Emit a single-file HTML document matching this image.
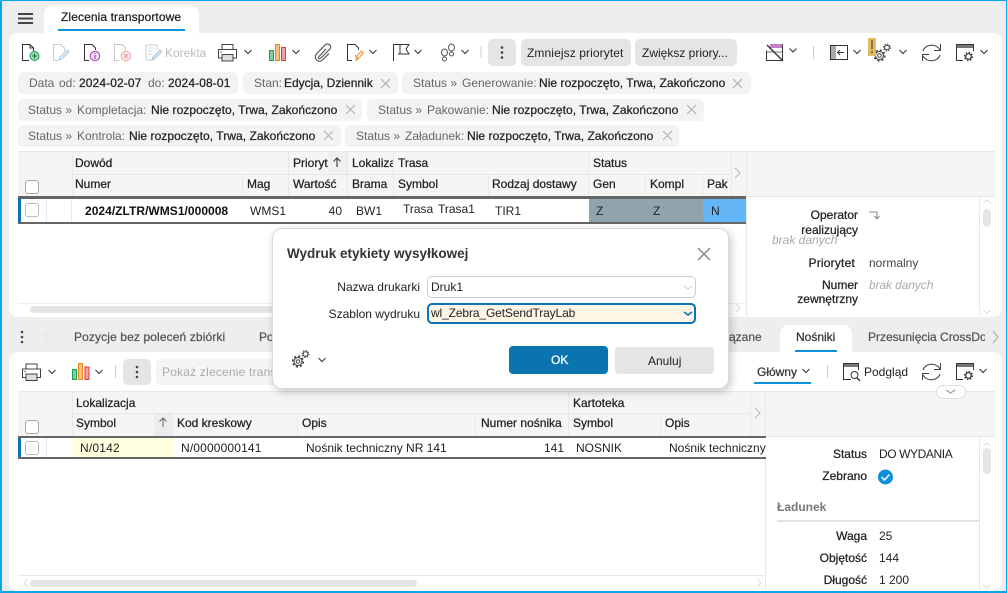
<!DOCTYPE html>
<html lang="pl"><head><meta charset="utf-8"><title>Zlecenia transportowe</title>
<style>
html,body{margin:0;padding:0;background:#eee}
body{width:1007px;height:593px;position:relative;overflow:hidden;font:12px/16px "Liberation Sans",Arial,sans-serif;color:#222}
.a{position:absolute}
.t{position:absolute;white-space:nowrap;height:16px}
.g{color:#666}
.m{-webkit-text-stroke:.25px currentColor}
.r{text-align:right}
.chip{position:absolute;background:#f3f3f3;border-radius:5px;height:22px}
.btn{position:absolute;background:#e5e5e5;border-radius:5px}
.h{background:#f5f5f5;position:absolute}
.v{position:absolute;width:1px;background:#e8e8e8}
.l{position:absolute;height:1px;background:#e8e8e8}
.cb{position:absolute;width:12px;height:12px;border:1px solid #aaa;border-radius:3px;background:#fff}
svg{position:absolute;left:0;top:0}
</style></head><body>
<div class="a" style="left:9px;top:33px;width:993px;height:284px;background:#fff;border-radius:9px"></div>
<div class="a" style="left:44px;top:5px;width:155px;height:30px;background:#fff;border-radius:9px 9px 0 0"></div>
<div class="a" style="left:58px;top:29px;width:127px;height:2px;background:#0a93d6"></div>
<div class="t m" style="left:61px;top:9px;letter-spacing:.1px">Zlecenia transportowe</div>

<div class="btn" style="left:488px;top:39px;width:28px;height:27px"></div>
<div class="btn" style="left:521px;top:39px;width:110px;height:27px"></div>
<div class="btn" style="left:635px;top:39px;width:102px;height:27px"></div>
<div class="t" style="left:527px;top:45px;letter-spacing:.1px">Zmniejsz priorytet</div>
<div class="t" style="left:642px;top:45px">Zwiększ priory...</div>
<div class="t" style="left:165px;top:45px;color:#bbb;letter-spacing:0">Korekta</div>

<div class="chip" style="left:18px;top:72px;width:220px"></div>
<div class="chip" style="left:243px;top:72px;width:155px"></div>
<div class="chip" style="left:402px;top:72px;width:349px"></div>
<div class="chip" style="left:18px;top:99px;width:344px"></div>
<div class="chip" style="left:367px;top:99px;width:337px"></div>
<div class="chip" style="left:18px;top:125px;width:323px"></div>
<div class="chip" style="left:345px;top:125px;width:334px"></div>

<div class="t g" style="left:29px;top:75px">Data</div><div class="t g" style="left:59px;top:75px">od:</div><div class="t m" style="left:79px;top:75px;letter-spacing:.1px">2024-02-07</div><div class="t g" style="left:148px;top:75px">do:</div><div class="t m" style="left:168px;top:75px;letter-spacing:.1px">2024-08-01</div>
<div class="t g" style="left:254px;top:75px">Stan:</div><div class="t m" style="left:284px;top:75px">Edycja, Dziennik</div>
<div class="t g" style="left:413px;top:75px">Status »</div><div class="t g" style="left:462px;top:75px">Generowanie:</div><div class="t m" style="left:539px;top:75px;letter-spacing:.05px">Nie rozpoczęto, Trwa, Zakończono</div>
<div class="t g" style="left:28px;top:102px">Status »</div><div class="t g" style="left:77px;top:102px">Kompletacja:</div><div class="t m" style="left:151px;top:102px;letter-spacing:.05px">Nie rozpoczęto, Trwa, Zakończono</div>
<div class="t g" style="left:378px;top:102px">Status »</div><div class="t g" style="left:427px;top:102px">Pakowanie:</div><div class="t m" style="left:492px;top:102px;letter-spacing:.05px">Nie rozpoczęto, Trwa, Zakończono</div>
<div class="t g" style="left:28px;top:128px">Status »</div><div class="t g" style="left:77px;top:128px">Kontrola:</div><div class="t m" style="left:129px;top:128px;letter-spacing:.05px">Nie rozpoczęto, Trwa, Zakończono</div>
<div class="t g" style="left:356px;top:128px">Status »</div><div class="t g" style="left:405px;top:128px">Załadunek:</div><div class="t m" style="left:467px;top:128px;letter-spacing:.05px">Nie rozpoczęto, Trwa, Zakończono</div>

<!-- top grid -->
<div class="l" style="left:18px;top:151px;width:977px"></div>
<div class="h" style="left:18px;top:152px;width:977px;height:44px"></div>
<div class="l" style="left:72px;top:174px;width:659px"></div>
<div class="v" style="left:72px;top:152px;height:44px"></div><div class="v" style="left:242px;top:174px;height:22px"></div>
<div class="v" style="left:288px;top:152px;height:44px"></div><div class="v" style="left:347px;top:152px;height:44px"></div>
<div class="v" style="left:393px;top:152px;height:44px"></div><div class="v" style="left:488px;top:174px;height:22px"></div>
<div class="v" style="left:588px;top:152px;height:44px"></div><div class="v" style="left:645px;top:174px;height:22px"></div>
<div class="v" style="left:702px;top:174px;height:22px"></div><div class="v" style="left:731px;top:152px;height:44px"></div>
<div class="v" style="left:746px;top:152px;height:164px"></div>
<div class="a" style="left:328px;top:152px;width:19px;height:22px;background:#f0f0f0"></div>
<div class="t m" style="left:75px;top:155px">Dowód</div>
<div class="t m" style="left:293px;top:155px;width:35px;overflow:hidden">Priorytet</div>
<div class="t m" style="left:352px;top:155px;width:41px;overflow:hidden">Lokalizacja</div>
<div class="t m" style="left:398px;top:155px">Trasa</div>
<div class="t m" style="left:593px;top:155px">Status</div>
<div class="t m" style="left:75px;top:176px">Numer</div><div class="t m" style="left:247px;top:176px">Mag</div><div class="t m" style="left:293px;top:176px">Wartość</div><div class="t m" style="left:352px;top:176px">Brama</div><div class="t m" style="left:398px;top:176px">Symbol</div><div class="t m" style="left:492px;top:176px">Rodzaj dostawy</div><div class="t m" style="left:593px;top:176px">Gen</div><div class="t m" style="left:650px;top:176px">Kompl</div><div class="t m" style="left:707px;top:176px">Pak</div>
<div class="cb" style="left:25px;top:180px"></div>

<div class="a" style="left:18px;top:196px;width:728px;height:28px;background:#666"></div>
<div class="a" style="left:18px;top:198px;width:3px;height:24px;background:#0a74b5"></div>
<div class="a" style="left:21px;top:199px;width:568px;height:23px;background:#fff"></div>
<div class="a" style="left:589px;top:199px;width:114px;height:23px;background:#90a4ae"></div>
<div class="a" style="left:703px;top:199px;width:43px;height:23px;background:#64b5f6"></div>
<div class="v" style="left:46px;top:199px;height:23px"></div><div class="v" style="left:71px;top:199px;height:23px"></div>
<div class="cb" style="left:25px;top:203px;border-color:#bbb"></div>
<div class="t" style="left:85px;top:203px;font-weight:bold;letter-spacing:.03px;color:#111">2024/ZLTR/WMS1/000008</div>
<div class="t" style="left:250px;top:203px">WMS1</div>
<div class="t r" style="left:300px;top:203px;width:42px">40</div>
<div class="t" style="left:356px;top:203px">BW1</div>
<div class="t" style="left:403px;top:201px">Trasa</div><div class="t" style="left:438px;top:201px">Trasa1</div>
<div class="t" style="left:495px;top:203px">TIR1</div>
<div class="t" style="left:596px;top:203px">Z</div><div class="t" style="left:653px;top:203px">Z</div><div class="t" style="left:711px;top:203px">N</div>

<div class="l" style="left:746px;top:196px;width:249px"></div>
<div class="v" style="left:979px;top:197px;height:119px"></div>
<div class="a" style="left:983px;top:209px;width:8px;height:18px;background:#e5e5e5;border-radius:4px"></div>
<div class="t m r" style="left:770px;top:207px;width:88px">Operator</div>
<div class="t m r" style="left:770px;top:222px;width:88px">realizujący</div>
<div class="t" style="left:772px;top:232px;color:#aaa;font-style:italic">brak danych</div>
<div class="t m r" style="left:770px;top:255px;width:85px;letter-spacing:.2px">Priorytet</div>
<div class="t" style="left:869px;top:255px;color:#444">normalny</div>
<div class="t m r" style="left:770px;top:277px;width:88px">Numer</div>
<div class="t m r" style="left:770px;top:291px;width:88px">zewnętrzny</div>
<div class="t" style="left:869px;top:277px;color:#aaa;font-style:italic;letter-spacing:-.1px">brak danych</div>
<div class="l" style="left:18px;top:303px;width:728px;background:#eee"></div>
<div class="a" style="left:30px;top:306px;width:250px;height:7px;background:#e5e5e5;border-radius:4px"></div>

<!-- lower tabs -->
<div class="a" style="left:780px;top:325px;width:72px;height:29px;background:#fff;border-radius:9px 9px 0 0"></div>
<div class="a" style="left:795px;top:350px;width:42px;height:2px;background:#0a93d6"></div>
<div class="t m" style="left:74px;top:329px;color:#555;letter-spacing:.12px">Pozycje bez poleceń zbiórki</div>
<div class="t m" style="left:259px;top:329px;color:#555">Po</div>
<div class="t m" style="left:729px;top:329px;color:#555">ązane</div>
<div class="t m" style="left:796px;top:329px;color:#333">Nośniki</div>
<div class="t m" style="left:868px;top:329px;width:117px;overflow:hidden;color:#555">Przesunięcia CrossDock</div>

<!-- lower panel -->
<div class="a" style="left:9px;top:352px;width:993px;height:239px;background:#fff;border-radius:9px"></div>
<div class="btn" style="left:123px;top:359px;width:28px;height:26px"></div>
<div class="a" style="left:156px;top:359px;width:130px;height:26px;background:#f5f5f5;border-radius:5px"></div>
<div class="t" style="left:162px;top:364px;color:#aaa;letter-spacing:.2px">Pokaż zlecenie trans</div>
<div class="t m" style="left:757px;top:364px;color:#333">Główny</div>
<div class="a" style="left:754px;top:382px;width:57px;height:2px;background:#0a93d6"></div>
<div class="t" style="left:864px;top:364px">Podgląd</div>

<div class="h" style="left:18px;top:392px;width:977px;height:44px"></div>
<div class="l" style="left:18px;top:391px;width:977px"></div>
<div class="l" style="left:72px;top:413px;width:678px"></div>
<div class="a" style="left:154px;top:414px;width:19px;height:22px;background:#ececec"></div>
<div class="v" style="left:72px;top:392px;height:44px"></div><div class="v" style="left:172px;top:414px;height:22px"></div><div class="v" style="left:297px;top:414px;height:22px"></div><div class="v" style="left:475px;top:414px;height:22px"></div><div class="v" style="left:568px;top:392px;height:44px"></div><div class="v" style="left:660px;top:414px;height:22px"></div><div class="v" style="left:750px;top:392px;height:44px"></div><div class="v" style="left:765px;top:392px;height:198px"></div>
<div class="t m" style="left:76px;top:395px">Lokalizacja</div><div class="t m" style="left:573px;top:395px">Kartoteka</div>
<div class="t m" style="left:76px;top:415px">Symbol</div><div class="t m" style="left:177px;top:415px">Kod kreskowy</div><div class="t m" style="left:302px;top:415px">Opis</div><div class="t m" style="left:481px;top:415px">Numer nośnika</div><div class="t m" style="left:573px;top:415px">Symbol</div><div class="t m" style="left:665px;top:415px">Opis</div>
<div class="cb" style="left:25px;top:420px"></div>

<div class="a" style="left:18px;top:436px;width:748px;height:23px;background:#666"></div>
<div class="a" style="left:18px;top:438px;width:3px;height:19px;background:#0a74b5"></div>
<div class="a" style="left:21px;top:438px;width:745px;height:19px;background:#fff"></div>
<div class="a" style="left:72px;top:438px;width:101px;height:19px;background:#ffffe0"></div>
<div class="v" style="left:46px;top:438px;height:19px"></div>
<div class="cb" style="left:25px;top:441px;border-color:#bbb"></div>
<div class="t" style="left:80px;top:440px;letter-spacing:.2px">N/0142</div>
<div class="t" style="left:181px;top:440px;letter-spacing:.15px">N/0000000141</div>
<div class="t" style="left:306px;top:440px">Nośnik techniczny NR 141</div>
<div class="t r" style="left:510px;top:440px;width:54px">141</div>
<div class="t" style="left:576px;top:440px">NOSNIK</div>
<div class="t" style="left:669px;top:440px;width:97px;overflow:hidden">Nośnik techniczny</div>

<div class="l" style="left:18px;top:575px;width:748px"></div>
<div class="a" style="left:30px;top:580px;width:387px;height:7px;background:#e5e5e5;border-radius:4px"></div>
<div class="l" style="left:766px;top:436px;width:229px"></div>
<div class="v" style="left:979px;top:437px;height:153px"></div>
<div class="a" style="left:983px;top:448px;width:8px;height:26px;background:#e5e5e5;border-radius:4px"></div>
<div class="a" style="left:936px;top:385px;width:28px;height:12px;background:#fff;border:1px solid #ddd;border-radius:7px"></div>
<div class="t m r" style="left:790px;top:446px;width:77px">Status</div><div class="t" style="left:879px;top:446px;letter-spacing:-.4px">DO WYDANIA</div>
<div class="t m r" style="left:790px;top:468px;width:77px">Zebrano</div>
<div class="t" style="left:777px;top:499px;color:#777;font-weight:bold">Ładunek</div>
<div class="a" style="left:777px;top:520px;width:202px;height:2px;background:#e2e2e2"></div>
<div class="t m r" style="left:790px;top:528px;width:77px">Waga</div><div class="t" style="left:879px;top:528px">25</div>
<div class="t m r" style="left:790px;top:550px;width:77px">Objętość</div><div class="t" style="left:879px;top:550px">144</div>
<div class="t m r" style="left:790px;top:572px;width:77px">Długość</div><div class="t" style="left:879px;top:572px">1 200</div>

<!-- icons -->
<svg width="1007" height="593" viewBox="0 0 1007 593" fill="none">
<g stroke="#444" stroke-width="2"><path d="M18 14h15M18 18.500h15M18 23h15"/></g>
<!-- doc add -->
<path d="M29 60.500H22.500V44.500H30L33.500 48V51M30 44.500V48H33.500" stroke="#333"/><circle cx="34.500" cy="56" r="4.500" fill="#9fdcb0" stroke="#1f9d55"/><path d="M32 56h5M34.500 53.500v5" stroke="#137a3c"/>
<!-- edit -->
<path d="M53.500 60.500V44.500H61L64.500 48V51M53.500 60.500H59" stroke="#ccc"/><path d="M59 60l1-3 7-7 2 2-7 7z" stroke="#a9d0ea" fill="#dcebf6"/>
<!-- info -->
<path d="M89 60.500H84.500V44.500H92L95.500 48V50" stroke="#333"/><circle cx="95" cy="56" r="4.800" fill="#ecd9f0" stroke="#a04bb2"/><path d="M95 55v4M95 53v1" stroke="#8b3a9c"/>
<!-- x -->
<path d="M119 60.500H114.500V44.500H122L125.500 48V50" stroke="#c8c8c8"/><circle cx="126" cy="56" r="4.800" fill="#fce8e8" stroke="#f2a9a9"/><path d="M124 54l4 4M128 54l-4 4" stroke="#f09a9a"/>
<!-- korekta -->
<path d="M146 60V45H157V50M146 60H152" stroke="#ccc"/><path d="M148 48h7M148 51h5M148 54h4" stroke="#c6d6e6"/><path d="M152 60l1-3 7-7 1.500 2-7 7z" stroke="#a9c6e0" fill="#d8e6f2"/>
<!-- printer -->
<g stroke="#444"><rect x="222" y="44.500" width="11" height="5"/><path d="M222 58h-3.500V49.500h18V58H233"/><rect x="222" y="54.500" width="11" height="6.500" fill="#ddd"/></g><path d="M220 52h2" stroke="#2a8fd0"/>
<path d="M244.500 50l3.500 3.500 3.500-3.500M292.500 50l3.500 3.500 3.500-3.500M369.500 50l3.500 3.500 3.500-3.500M414.500 50l3.500 3.500 3.500-3.500M461.500 50l3.500 3.500 3.500-3.500M789.500 48.500l3.500 3.500 3.500-3.500M853.500 50l3.500 3.500 3.500-3.500M899.500 50l3.500 3.500 3.500-3.500M980.500 50l3.500 3.500 3.500-3.500" stroke="#444" stroke-width="1.200"/>
<!-- chart -->
<rect x="269.500" y="50.500" width="4" height="10" fill="#7fd09a" stroke="#1f9d55"/><rect x="275.500" y="44.500" width="4" height="16" fill="#f6c27d" stroke="#ea8a1e"/><rect x="281.500" y="47.500" width="4" height="13" fill="#f3a0a0" stroke="#e03a3a"/>
<!-- clip -->
<path d="M326 49L319 56.500c-1.500 1.500.5 3 2 1.500L330 49c2.500-3-2-7-5-4L316.500 54c-3.500 4 2 10 6 6L329 53.500" stroke="#555" stroke-width="1.200"/>
<!-- doc orange -->
<path d="M352 60.500H347.500V44.500H355L358.500 48V50" stroke="#333"/><path d="M356 60l1.500-5 4-4 1.500 2-3.500 4.500-3.500 2.500zM355 55l3 5" stroke="#f09432" stroke-width="1.200"/>
<!-- flag -->
<path d="M393.500 61V44.500H409L406 49l3 5H398" stroke="#333"/><path d="M400 44.500V54" stroke="#333"/>
<!-- steps -->
<g stroke="#555"><ellipse cx="444.500" cy="52.500" rx="3" ry="3.500"/><circle cx="444.500" cy="59" r="2"/><ellipse cx="451.500" cy="47.500" rx="3" ry="3.500"/><circle cx="451.500" cy="54" r="2"/></g>
<path d="M481 46v12" stroke="#ccc"/>
<g fill="#444"><circle cx="502" cy="47.500" r="1.300"/><circle cx="502" cy="52.500" r="1.300"/><circle cx="502" cy="57.500" r="1.300"/></g>
<!-- no calendar -->
<rect x="770" y="44" width="13" height="4" fill="#c37cc7"/><path d="M766.500 50.500V60.500H782.500V44.500" stroke="#333"/><path d="M767 52h15" stroke="#bbb" stroke-width="2"/><path d="M767 45l16 16" stroke="#333" stroke-width="1.300"/>
<path d="M813.500 46v13" stroke="#ccc"/>
<!-- panel -->
<rect x="830.500" y="45.500" width="17" height="14" stroke="#333"/><rect x="831" y="46" width="5" height="13" fill="#aaa"/><path d="M844 52.500h-6M840 50l-2.500 2.500L840 55" stroke="#333"/>
<!-- gears -->
<g stroke="#444"><circle cx="879.500" cy="55.500" r="1.800"/><circle cx="879.500" cy="55.500" r="4" stroke-width="1.100"/><circle cx="879.500" cy="55.500" r="5.300" stroke-dasharray="2.080" stroke-width="1.600"/><circle cx="887" cy="47.500" r="2.300"/><circle cx="887" cy="47.500" r="3.400" stroke-dasharray="1.330" stroke-width="1.200"/></g>
<!-- warn -->
<rect x="868" y="38" width="8" height="18" fill="#e5b95f"/><path d="M872 40v9M872 51v2" stroke="#555" stroke-width="1.400"/>
<!-- refresh -->
<path d="M923 51c2-7 13-8 17-1M940 55c-2 7-13 8-17 1" stroke="#444" stroke-width="1.100"/><path d="M940.500 44v6.500H934M922.500 61v-6.500H929" stroke="#444"/>
<!-- window gear -->
<rect x="956" y="44" width="17" height="4" fill="#777"/><path d="M956.500 44.500H973.500V51M963 60.500H956.500V44.500" stroke="#333"/><circle cx="968.500" cy="56.500" r="2.800" stroke="#333" stroke-width="1.200"/><circle cx="968.500" cy="56.500" r="4" stroke="#333" stroke-dasharray="1.570" stroke-width="1.200"/>
<!-- chip x -->
<g stroke="#aaa"><path d="M381 79l9 9M390 79l-9 9M733 79l9 9M742 79l-9 9M346 105l9 9M355 105l-9 9M687 105l9 9M696 105l-9 9M324 131l9 9M333 131l-9 9M663 131l9 9M672 131l-9 9"/></g>
<!-- grid -->
<path d="M337 167v-9M333.500 161.500l3.500-3.500 3.500 3.500" stroke="#444" stroke-width="1.200"/>
<path d="M735 168l5 5-5 5" stroke="#bbb"/>
<path d="M869 212h8v6M874.500 216l2.500 3 2.500-3" stroke="#888"/>
<path d="M983 203l4-3 4 3M983 310l4 3 4-3" stroke="#ddd"/>
<path d="M736 304l4 4-4 4" stroke="#ddd"/>
<!-- lower -->
<g fill="#444"><circle cx="22" cy="332" r="1.300"/><circle cx="22" cy="337" r="1.300"/><circle cx="22" cy="342" r="1.300"/><circle cx="137" cy="367" r="1.300"/><circle cx="137" cy="372" r="1.300"/><circle cx="137" cy="377" r="1.300"/></g>
<path d="M49 330l-5 6 5 6" stroke="#e2e2e2"/>
<path d="M993 331l5 6-5 6" stroke="#aaa"/>
<g stroke="#444"><rect x="26" y="364" width="11" height="5"/><path d="M26 377.500h-3.500V369h18v8.500H37"/><rect x="26" y="374" width="11" height="6.500" fill="#ddd"/></g><path d="M24 371.500h2" stroke="#2a8fd0"/>
<path d="M48.500 370l3.500 3.500 3.500-3.500M95.500 370l3.500 3.500 3.500-3.500M802.500 369l3.500 3.500 3.500-3.500M979.500 369l3.500 3.500 3.500-3.500" stroke="#444" stroke-width="1.200"/>
<rect x="72.500" y="369.500" width="4" height="10" fill="#7fd09a" stroke="#1f9d55"/><rect x="78.500" y="363.500" width="4" height="16" fill="#f6c27d" stroke="#ea8a1e"/><rect x="85" y="367" width="4" height="12.500" fill="#f3a0a0" stroke="#e03a3a"/>
<path d="M115.500 365v13M827.500 365v13" stroke="#ccc"/>
<!-- podglad -->
<rect x="843" y="363" width="15" height="4" fill="#777"/><path d="M843.500 363.500H858.500V370M851 379.500H843.500V363.500" stroke="#333"/><circle cx="854.500" cy="375" r="3.500" stroke="#333"/><path d="M857 378l3 3" stroke="#333" stroke-width="1.400"/>
<path d="M923 370c2-7 13-8 17-1M940 374c-2 7-13 8-17 1" stroke="#444" stroke-width="1.100"/><path d="M940.500 363v6.500H934M922.500 380v-6.500H929" stroke="#444"/>
<rect x="956" y="363" width="17" height="4" fill="#777"/><path d="M956.500 363.500H973.500V370M963 379.500H956.500V363.500" stroke="#333"/><circle cx="968.500" cy="375.500" r="2.800" stroke="#333" stroke-width="1.200"/><circle cx="968.500" cy="375.500" r="4" stroke="#333" stroke-dasharray="1.570" stroke-width="1.200"/>
<path d="M946 390l4.500 3 4.500-3" stroke="#999" stroke-width="1.200"/>
<path d="M163 427v-9M159.500 421.500l3.500-3.500 3.500 3.500" stroke="#666"/>
<path d="M755 408l5 5-5 5" stroke="#bbb"/>
<path d="M983 446l4-3 4 3M983 585l4 3 4-3" stroke="#ddd"/>
<path d="M28 579l-4 4 4 4M757 579l4 4-4 4" stroke="#ddd"/>
<circle cx="885.500" cy="477" r="7.500" fill="#0a8fdc"/><path d="M881.500 477l3 3 5-5.500" stroke="#fff" stroke-width="1.500"/>
</svg>

<!-- dialog -->
<div class="a" style="left:272px;top:228px;width:455px;height:159px;background:#fff;border:1px solid #d8d8d8;border-radius:10px;box-shadow:2px 3px 9px rgba(0,0,0,.22)"></div>
<div class="t" style="left:287px;top:246px;font-size:13.500px;font-weight:bold;color:#333">Wydruk etykiety wysyłkowej</div>
<div class="t r" style="left:300px;top:279px;width:120px">Nazwa drukarki</div>
<div class="t r" style="left:300px;top:306px;width:120px">Szablon wydruku</div>
<div class="a" style="left:427px;top:276px;width:267px;height:20px;border:1px solid #ccc;border-radius:5px;background:#fff"></div>
<div class="a" style="left:427px;top:303px;width:265px;height:17px;border:2px solid #0a74b5;border-radius:5px;background:#fdf5e6"></div>
<div class="t" style="left:431px;top:279px">Druk1</div>
<div class="t" style="left:431px;top:305px;letter-spacing:-.12px">wl_Zebra_GetSendTrayLab</div>
<div class="a" style="left:509px;top:346px;width:99px;height:28px;background:#0a74b0;border-radius:4px"></div>
<div class="t m" style="left:551px;top:352px;color:#fff">OK</div>
<div class="a" style="left:615px;top:347px;width:99px;height:27px;background:#e5e5e5;border-radius:4px"></div>
<div class="t" style="left:648px;top:353px">Anuluj</div>
<svg width="1007" height="593" viewBox="0 0 1007 593" fill="none">
<path d="M698 248l12 12M710 248l-12 12" stroke="#999" stroke-width="1.800"/>
<path d="M684 286l4 3 4-3" stroke="#ccc"/>
<path d="M684 312l4 3 4-3" stroke="#0a74b5" stroke-width="1.500"/>
<g stroke="#444"><circle cx="298" cy="361.500" r="1.800"/><circle cx="298" cy="361.500" r="4" stroke-width="1.100"/><circle cx="298" cy="361.500" r="5.300" stroke-dasharray="2.080" stroke-width="1.600"/><circle cx="305.500" cy="354" r="2.300"/><circle cx="305.500" cy="354" r="3.400" stroke-dasharray="1.330" stroke-width="1.200"/></g>
<path d="M318.500 358l3.500 3.500 3.500-3.500" stroke="#444" stroke-width="1.200"/>
</svg>

<!-- frame -->
<div class="a" style="left:0;top:0;width:1007px;height:593px;box-sizing:border-box;border:solid #0aa4ea;border-width:1px 1px 2px 2px;pointer-events:none"></div>
</body></html>
